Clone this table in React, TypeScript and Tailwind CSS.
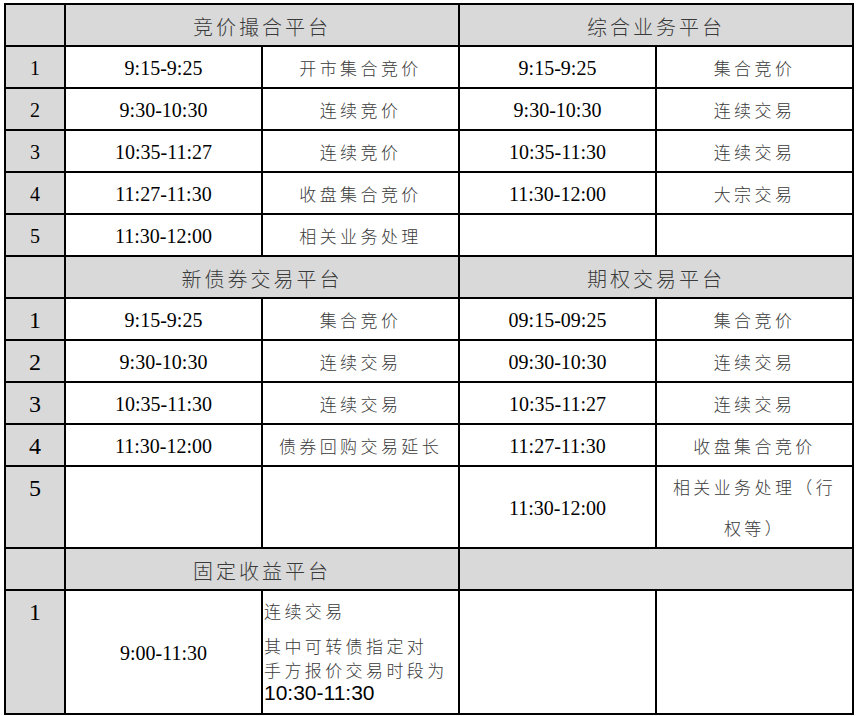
const serif = "font-['Liberation_Serif','Times_New_Roman',serif] text-black"
const cjk = "font-['Noto_Sans_CJK_SC','Noto_Sans',sans-serif] font-light text-[#3a3a3a]"

type Row = [string, string, string, string, string]

const block1: Row[] = [
  ['1', '9:15-9:25', '开市集合竞价', '9:15-9:25', '集合竞价'],
  ['2', '9:30-10:30', '连续竞价', '9:30-10:30', '连续交易'],
  ['3', '10:35-11:27', '连续竞价', '10:35-11:30', '连续交易'],
  ['4', '11:27-11:30', '收盘集合竞价', '11:30-12:00', '大宗交易'],
  ['5', '11:30-12:00', '相关业务处理', '', ''],
]

const block2: Row[] = [
  ['1', '9:15-9:25', '集合竞价', '09:15-09:25', '集合竞价'],
  ['2', '9:30-10:30', '连续交易', '09:30-10:30', '连续交易'],
  ['3', '10:35-11:30', '连续交易', '10:35-11:27', '连续交易'],
  ['4', '11:30-12:00', '债券回购交易延长', '11:27-11:30', '收盘集合竞价'],
]

function Header({ left, right }: { left: string; right?: string }) {
  return (
    <>
      <div className="bg-[#d9d9d9]" />
      <div className={`col-span-2 flex items-center justify-center bg-[#d9d9d9] pt-[3px] text-[20px] tracking-[3px] ${cjk}`}>
        {left}
      </div>
      <div className={`col-span-2 flex items-center justify-center bg-[#d9d9d9] pt-[3px] text-[20px] tracking-[3px] ${cjk}`}>
        {right}
      </div>
    </>
  )
}

function Num({ n, big }: { n: string; big?: boolean }) {
  return (
    <div className={`flex items-center justify-center bg-[#d9d9d9] pt-[2px] ${big ? 'text-[24px]' : 'text-[20px]'} ${serif}`}>
      {n}
    </div>
  )
}

function Time({ t }: { t: string }) {
  return (
    <div className={`flex items-center justify-center bg-white pt-[2px] text-[20px] ${serif}`}>{t}</div>
  )
}

function Label({ t }: { t: string }) {
  return (
    <div className={`flex items-center justify-center bg-white pt-[1px] text-[17px] tracking-[3.4px] ${cjk}`}>{t}</div>
  )
}

function Rows({ rows, big }: { rows: Row[]; big?: boolean }) {
  return (
    <>
      {rows.map((r, i) => (
        <div key={i} className="contents">
          <Num n={r[0]} big={big} />
          <Time t={r[1]} />
          <Label t={r[2]} />
          <Time t={r[3]} />
          <Label t={r[4]} />
        </div>
      ))}
    </>
  )
}

export default function App() {
  return (
    <div className="min-h-[716px] bg-white pl-[4px] pt-[3px]">
      <div className="grid w-fit grid-cols-[58px_195px_195px_195px_195px] grid-rows-[repeat(11,40px)_80px_40px_122px] gap-[2px] bg-black p-[2px]">
        <Header left="竞价撮合平台" right="综合业务平台" />
        <Rows rows={block1} />

        <Header left="新债券交易平台" right="期权交易平台" />
        <Rows rows={block2} big />

        {/* tall row 5 */}
        <div className={`flex items-start justify-center bg-[#d9d9d9] pt-[7px] text-[24px] leading-[28px] ${serif}`}>5</div>
        <div className="bg-white" />
        <div className="bg-white" />
        <Time t="11:30-12:00" />
        <div className={`flex flex-col items-center justify-center bg-white text-center text-[17px] leading-[41px] tracking-[3.4px] ${cjk}`}>
          <span>相关业务处理（行</span>
          <span>权等）</span>
        </div>

        <Header left="固定收益平台" />

        {/* fixed income row */}
        <div className={`flex items-start justify-center bg-[#d9d9d9] pt-[7px] text-[24px] leading-[28px] ${serif}`}>1</div>
        <Time t="9:00-11:30" />
        <div className="flex flex-col bg-white pl-[1px] pt-[8px]">
          <span className={`text-[17px] leading-[24px] tracking-[3.4px] ${cjk}`}>连续交易</span>
          <span className={`mt-[11px] text-[17px] leading-[24px] tracking-[3.4px] ${cjk}`}>其中可转债指定对</span>
          <span className={`text-[17px] leading-[24px] tracking-[3.4px] ${cjk}`}>手方报价交易时段为</span>
          <span className="font-['Liberation_Sans',Arial,sans-serif] text-[21px] leading-[22px] text-black">10:30-11:30</span>
        </div>
        <div className="bg-white" />
        <div className="bg-white" />
      </div>
    </div>
  )
}
